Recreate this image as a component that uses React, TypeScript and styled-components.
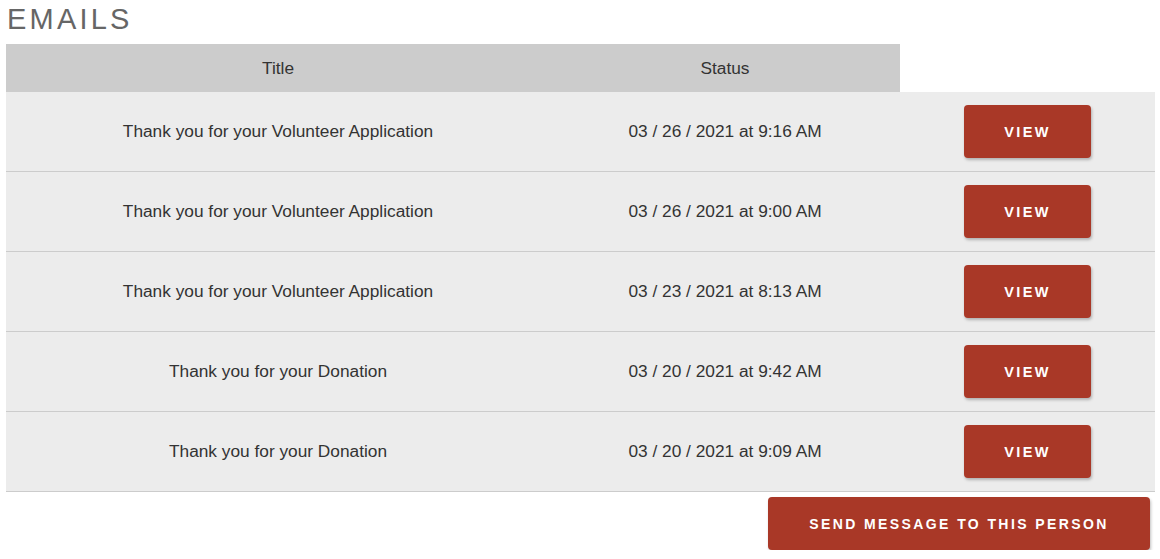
import React from "react";
import styled, { createGlobalStyle } from "styled-components";

const GlobalStyle = createGlobalStyle`
  body {
    margin: 0;
    background: #fff;
    font-family: "Liberation Sans", Arial, sans-serif;
  }
`;

const Page = styled.div`
  padding: 0 5px 0 6px;
`;

const Heading = styled.h2`
  margin: 0;
  padding: 2px 0 0 1px;
  height: 44px;
  box-sizing: border-box;
  font-size: 29px;
  font-weight: 400;
  letter-spacing: 3.2px;
  color: #666;
  line-height: 34px;
`;

const Table = styled.table`
  width: 100%;
  border-collapse: collapse;
  border-spacing: 0;
`;

const HeadCell = styled.th<{ $blank?: boolean }>`
  height: 48px;
  padding: 0;
  background: ${({ $blank }) => ($blank ? "#fff" : "#ccc")};
  font-size: 17.3px;
  font-weight: 400;
  color: #333;
  text-align: center;
`;

const Row = styled.tr`
  background: #ececec;
  border-bottom: 1px solid #ccc;
`;

const Cell = styled.td`
  height: 79px;
  padding: 0;
  font-size: 17.3px;
  color: #333;
  text-align: center;
`;

const RedButton = styled.button<{ $wide?: boolean }>`
  display: inline-flex;
  align-items: center;
  justify-content: center;
  width: ${({ $wide }) => ($wide ? "382px" : "127px")};
  height: 53px;
  border: none;
  border-radius: 4px;
  background: #a93827;
  color: #fff;
  font-family: "Liberation Sans", Arial, sans-serif;
  font-size: ${({ $wide }) => ($wide ? "14px" : "14.5px")};
  font-weight: 700;
  letter-spacing: ${({ $wide }) => ($wide ? "2.4px" : "2.4px")};
  box-shadow: 1px 2px 3px rgba(0, 0, 0, 0.25);
  cursor: pointer;
`;

const Footer = styled.div`
  display: flex;
  justify-content: flex-end;
  padding: 5px 5px 0 0;
`;

const emails = [
  { title: "Thank you for your Volunteer Application", date: "03 / 26 / 2021 at 9:16 AM" },
  { title: "Thank you for your Volunteer Application", date: "03 / 26 / 2021 at 9:00 AM" },
  { title: "Thank you for your Volunteer Application", date: "03 / 23 / 2021 at 8:13 AM" },
  { title: "Thank you for your Donation", date: "03 / 20 / 2021 at 9:42 AM" },
  { title: "Thank you for your Donation", date: "03 / 20 / 2021 at 9:09 AM" },
];

export default function App() {
  return (
    <Page>
      <GlobalStyle />
      <Heading>EMAILS</Heading>
      <Table>
        <colgroup>
          <col style={{ width: 544 }} />
          <col style={{ width: 350 }} />
          <col />
        </colgroup>
        <thead>
          <tr>
            <HeadCell>Title</HeadCell>
            <HeadCell>Status</HeadCell>
            <HeadCell $blank />
          </tr>
        </thead>
        <tbody>
          {emails.map((e, i) => (
            <Row key={i}>
              <Cell>{e.title}</Cell>
              <Cell>{e.date}</Cell>
              <Cell>
                <RedButton>VIEW</RedButton>
              </Cell>
            </Row>
          ))}
        </tbody>
      </Table>
      <Footer>
        <RedButton $wide>SEND MESSAGE TO THIS PERSON</RedButton>
      </Footer>
    </Page>
  );
}
